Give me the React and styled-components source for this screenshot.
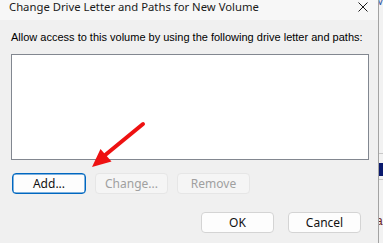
import React from "react";
import styled, { createGlobalStyle } from "styled-components";

const GlobalStyle = createGlobalStyle`
  body {
    margin: 0;
    background: #f0f0f0;
    font-family: "Noto Sans", "Liberation Sans", sans-serif;
  }
`;

const Frame = styled.div`
  position: relative;
  display: flex;
  width: 383px;
  height: 243px;
  overflow: hidden;
`;

const Dialog = styled.div`
  display: flex;
  flex-direction: column;
  width: 379px;
  flex-shrink: 0;
  box-sizing: border-box;
  border-right: 1px solid #a3a3a3;
  background: #f0f0f0;
`;

const TitleBar = styled.div`
  display: flex;
  justify-content: space-between;
  align-items: flex-start;
  height: 20px;
  padding: 0 10px 0 9px;
  background: #f7f7f7;
`;

const Title = styled.div`
  font-size: 11.3px;
  line-height: 11px;
  color: #1a1a1a;
  padding-top: 1px;
`;

const CloseIcon = styled.svg`
  margin-top: 2px;
  width: 10px;
  height: 10px;
`;

const Body = styled.div`
  display: flex;
  flex-direction: column;
  padding: 0 0 0 11px;
`;

const Label = styled.div`
  margin-top: 10px;
  font-family: "Liberation Sans", sans-serif;
  font-size: 11px;
  line-height: 14px;
  color: #000;
`;

const ListBox = styled.div`
  margin-top: 10px;
  width: 358px;
  height: 106px;
  box-sizing: border-box;
  border: 1px solid #828790;
  background: #fff;
`;

const ButtonRow = styled.div`
  display: flex;
  gap: ${(p) => p.$gap}px;
  justify-content: ${(p) => (p.$right ? "flex-end" : "flex-start")};
  margin-top: ${(p) => p.$top}px;
  padding-left: ${(p) => (p.$right ? 0 : 1)}px;
  padding-right: ${(p) => (p.$right ? 17 : 0)}px;
`;

const Button = styled.button`
  width: ${(p) => p.$w || 73}px;
  height: 21px;
  padding: 0;
  box-sizing: border-box;
  border-radius: 4px;
  font-family: "Noto Sans", sans-serif;
  font-size: 12px;
  color: ${(p) => (p.disabled ? "#a0a0a0" : "#111")};
  background: ${(p) => (p.disabled ? "#f5f5f5" : "#fdfdfd")};
  border: 1px solid
    ${(p) => (p.$focused ? "#0067c0" : p.disabled ? "#e6e6e6" : "#d4d4d4")};
  box-shadow: ${(p) => (p.$focused ? "inset 0 0 0 0.5px #0067c0" : "none")};
`;

const Backdrop = styled.div`
  flex: 1;
  display: flex;
  flex-direction: column;
  background: #f2f2f2;
  overflow: hidden;
`;

const BackGlyph = styled.div`
  margin: -4px 0 0 -2px;
  font-size: 11px;
  line-height: 10px;
  color: #3a5ea8;
`;

const BackLine = styled.div`
  margin-top: ${(p) => p.$top}px;
  height: ${(p) => p.$h || 1}px;
  background: ${(p) => p.$color};
`;

const BackText = styled.div`
  margin: 34px 0 0 -3px;
  font-family: "Liberation Sans", sans-serif;
  font-size: 12px;
  line-height: 14px;
  color: #6b1e1e;
  white-space: nowrap;
`;

const Arrow = styled.svg`
  position: absolute;
  left: 0;
  top: 0;
  pointer-events: none;
`;

export default function App() {
  return (
    <>
      <GlobalStyle />
      <Frame>
        <Dialog>
          <TitleBar>
            <Title>Change Drive Letter and Paths for New Volume</Title>
            <CloseIcon viewBox="0 0 10 10">
              <path d="M0.5 0.5 L9.5 9.5 M9.5 0.5 L0.5 9.5" stroke="#1a1a1a" strokeWidth="1" />
            </CloseIcon>
          </TitleBar>
          <Body>
            <Label>Allow access to this volume by using the following drive letter and paths:</Label>
            <ListBox />
            <ButtonRow $top={13} $gap={9}>
              <Button $focused $w={74}>Add...</Button>
              <Button disabled>Change...</Button>
              <Button disabled>Remove</Button>
            </ButtonRow>
            <ButtonRow $top={18} $gap={14} $right>
              <Button $w={73}>OK</Button>
              <Button $w={73}>Cancel</Button>
            </ButtonRow>
          </Body>
        </Dialog>
        <Backdrop>
          <BackGlyph>V</BackGlyph>
          <BackLine $top={147} $color="#c8c8c8" />
          <BackLine $top={9} $h={13} $color="#0a1a6e" />
          <BackLine $top={3} $color="#c8c8c8" />
          <BackText>ar</BackText>
        </Backdrop>
        <Arrow width="383" height="243" viewBox="0 0 383 243">
          <line x1="143" y1="124" x2="104" y2="156" stroke="#ee1111" strokeWidth="4" strokeLinecap="round" />
          <polygon points="92,167 100.5,149 111.5,161.5" fill="#ee1111" />
        </Arrow>
      </Frame>
    </>
  );
}
